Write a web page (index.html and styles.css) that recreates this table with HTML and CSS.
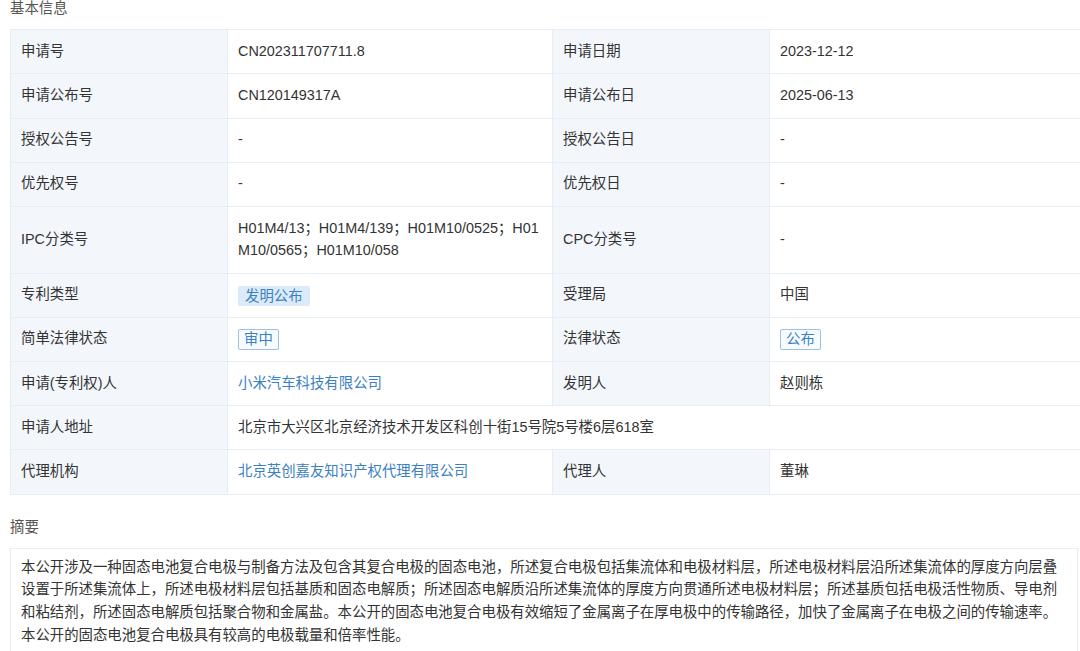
FILE: index.html
```html
<!DOCTYPE html>
<html lang="zh-CN">
<head>
<meta charset="utf-8">
<title>基本信息</title>
<link rel="stylesheet" href="styles.css">
</head>
<body>
<div class="page">
  <div class="section-title">基本信息</div>
  <table class="info">
    <colgroup>
      <col class="c-label"><col class="c-value"><col class="c-label"><col class="c-value">
    </colgroup>
    <tr class="short"><th>申请号</th><td>CN202311707711.8</td><th>申请日期</th><td>2023-12-12</td></tr>
    <tr><th>申请公布号</th><td>CN120149317A</td><th>申请公布日</th><td>2025-06-13</td></tr>
    <tr class="short"><th>授权公告号</th><td>-</td><th>授权公告日</th><td>-</td></tr>
    <tr class="short"><th>优先权号</th><td>-</td><th>优先权日</th><td>-</td></tr>
    <tr class="tall"><th>IPC分类号</th><td class="ipc">H01M4/13；H01M4/139；H01M10/0525；H01<br>M10/0565；H01M10/058</td><th>CPC分类号</th><td>-</td></tr>
    <tr class="short"><th>专利类型</th><td><span class="tag tag-fill">发明公布</span></td><th>受理局</th><td>中国</td></tr>
    <tr class="short"><th>简单法律状态</th><td><span class="tag tag-line">审中</span></td><th>法律状态</th><td><span class="tag tag-line">公布</span></td></tr>
    <tr><th>申请(专利权)人</th><td class="link">小米汽车科技有限公司</td><th>发明人</th><td>赵则栋</td></tr>
    <tr class="short"><th>申请人地址</th><td colspan="3">北京市大兴区北京经济技术开发区科创十街15号院5号楼6层618室</td></tr>
    <tr><th>代理机构</th><td class="link">北京英创嘉友知识产权代理有限公司</td><th>代理人</th><td>董琳</td></tr>
  </table>
  <div class="section-title abstract-title">摘要</div>
  <div class="abstract">本公开涉及一种固态电池复合电极与制备方法及包含其复合电极的固态电池，所述复合电极包括集流体和电极材料层，所述电极材料层沿所述集流体的厚度方向层叠设置于所述集流体上，所述电极材料层包括基质和固态电解质；所述固态电解质沿所述集流体的厚度方向贯通所述电极材料层；所述基质包括电极活性物质、导电剂和粘结剂，所述固态电解质包括聚合物和金属盐。本公开的固态电池复合电极有效缩短了金属离子在厚电极中的传输路径，加快了金属离子在电极之间的传输速率。<br>本公开的固态电池复合电极具有较高的电极载量和倍率性能。</div>
</div>
</body>
</html>
```
FILE: styles.css
```css
html, body {
  margin: 0;
  padding: 0;
  background: #ffffff;
  overflow: hidden;
}
.page {
  font-family: "Liberation Sans", "Noto Sans CJK SC", sans-serif;
  font-size: 14.4px;
  color: #333333;
  width: 1100px;
}
.section-title {
  margin: -2px 0 11px 10px;
  line-height: 20px;
  color: #555555;
}
.abstract-title {
  margin: 22px 0 11px 10px;
}
.info {
  margin-left: 10px;
  border-collapse: collapse;
  table-layout: fixed;
  width: 1084px;
}
.c-label { width: 217px; }
.c-value { width: 325px; }
.info th, .info td {
  border: 1px solid #e6edf5;
  padding: 11px 10px;
  line-height: 21.6px;
  text-align: left;
  vertical-align: middle;
  font-weight: normal;
}
.info tr.short th, .info tr.short td {
  padding-top: 10.7px;
  padding-bottom: 10.7px;
}
.info th {
  background: #f3f7fc;
  color: #333333;
}
.info td {
  background: #ffffff;
}
.info tr.tall td, .info tr.tall th {
  padding-top: 11.5px;
  padding-bottom: 11.5px;
}
.link {
  color: #3b80c3;
}
.tag {
  display: inline-block;
  line-height: 19px;
  border-radius: 2px;
  color: #3b80c3;
  vertical-align: middle;
}
.tag-fill {
  background: #dcebf9;
  padding: 1px 7px 0;
}
.tag-line {
  border: 1px solid #9dc0e3;
  background: #f7fbff;
  padding: 0 5px;
}
.abstract {
  margin-left: 10px;
  width: 1046px;
  border: 1px solid #e6edf5;
  padding: 7px 10px 16px;
  line-height: 22.6px;
  color: #333333;
}
```
